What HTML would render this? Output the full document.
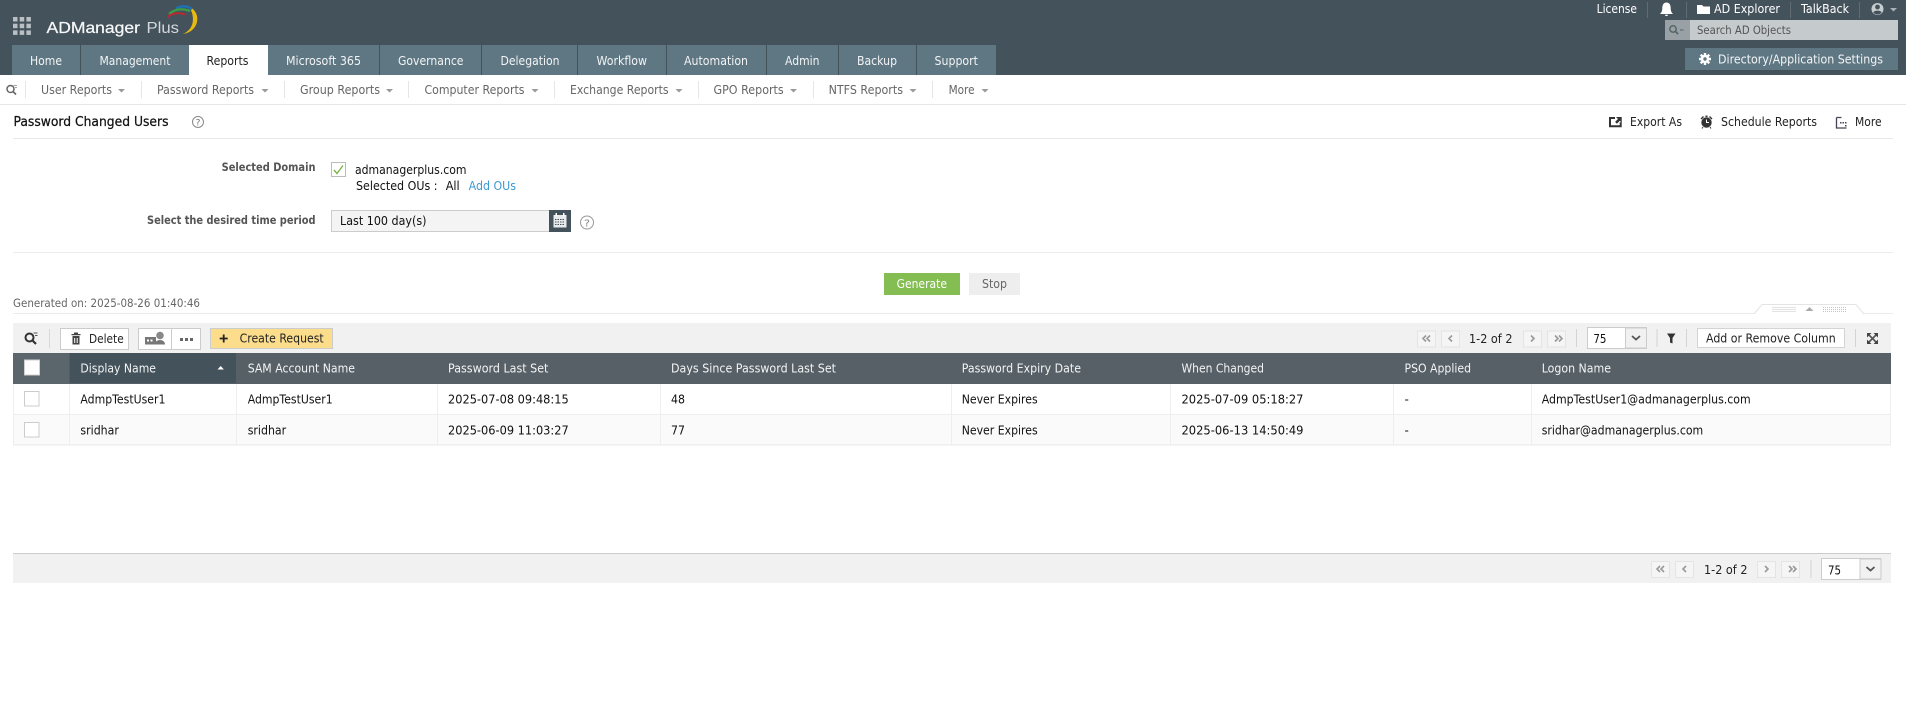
<!DOCTYPE html>
<html><head><meta charset="utf-8"><title>ADManager Plus</title>
<style>
html,body{margin:0;padding:0;background:#fff;width:1906px;height:724px;overflow:hidden}
svg{display:block}
text{font-family:"DejaVu Sans","Liberation Sans",sans-serif;font-size:12px;white-space:pre}
.w{fill:#fff}.g{fill:#666}.k{fill:#111}.b{font-weight:bold;fill:#555;font-size:11.5px}
.h{fill:#f2f4f5}
</style></head><body>
<svg xmlns="http://www.w3.org/2000/svg" width="1906" height="724" viewBox="0 0 1906 724">
<!-- header -->
<rect width="1906" height="75" fill="#44525b"/>
<g fill="#b9bfc3"><rect x="13" y="17" width="4.5" height="4.5"/><rect x="19.7" y="17" width="4.5" height="4.5"/><rect x="26.4" y="17" width="4.5" height="4.5"/><rect x="13" y="23.7" width="4.5" height="4.5"/><rect x="19.7" y="23.7" width="4.5" height="4.5"/><rect x="26.4" y="23.7" width="4.5" height="4.5"/><rect x="13" y="30.4" width="4.5" height="4.5"/><rect x="19.7" y="30.4" width="4.5" height="4.5"/><rect x="26.4" y="30.4" width="4.5" height="4.5"/></g>
<text x="46.5" y="33" textLength="93.5" lengthAdjust="spacingAndGlyphs" fill="#f6f7f8" stroke="#f6f7f8" stroke-width=".25" style="font-family:'Liberation Sans',sans-serif;font-size:16px">ADManager</text>
<text x="146.5" y="33" textLength="32.5" lengthAdjust="spacingAndGlyphs" fill="#d5d9dc" style="font-family:'Liberation Sans',sans-serif;font-size:16px">Plus</text>
<path d="M187.5 5.5C195 9 198.5 15 197 22C195.5 28.5 190 33 183 34C188.5 31.5 192 27.5 192.8 21.5C193.5 15 191.5 9.5 187.5 5.5Z" fill="#e8b90f"/>
<path d="M176 8.5Q184 4 192 9" fill="none" stroke="#1f6fb2" stroke-width="2.6"/>
<path d="M169 14Q178 6.500 190 11" fill="none" stroke="#3d9a46" stroke-width="2.300"/>
<path d="M167.500 17Q175 11 185 14.500" fill="none" stroke="#c0262d" stroke-width="1.800"/>

<!-- tabs -->
<g fill="#5f7783"><rect x="12" y="45" width="68" height="30"/><rect x="81" y="45" width="108" height="30"/><rect x="268" y="45" width="111" height="30"/><rect x="380" y="45" width="101" height="30"/><rect x="482" y="45" width="95" height="30"/><rect x="578" y="45" width="88" height="30"/><rect x="667" y="45" width="99" height="30"/><rect x="767" y="45" width="71" height="30"/><rect x="839" y="45" width="77" height="30"/><rect x="917" y="45" width="79" height="30"/></g>
<rect x="189" y="45" width="79" height="31" fill="#fff"/>
<g class="h">
<text class="h" x="30" y="65" textLength="32" lengthAdjust="spacingAndGlyphs">Home</text>
<text class="h" x="99.5" y="65" textLength="71" lengthAdjust="spacingAndGlyphs">Management</text>
<text x="206.500" y="65" textLength="42" lengthAdjust="spacingAndGlyphs" fill="#222">Reports</text>
<text class="h" x="286" y="65" textLength="75" lengthAdjust="spacingAndGlyphs">Microsoft 365</text>
<text class="h" x="398" y="65" textLength="65.5" lengthAdjust="spacingAndGlyphs">Governance</text>
<text class="h" x="500.500" y="65" textLength="59" lengthAdjust="spacingAndGlyphs">Delegation</text>
<text class="h" x="596.500" y="65" textLength="50.500" lengthAdjust="spacingAndGlyphs">Workflow</text>
<text class="h" x="684" y="65" textLength="64" lengthAdjust="spacingAndGlyphs">Automation</text>
<text class="h" x="785" y="65" textLength="34.500" lengthAdjust="spacingAndGlyphs">Admin</text>
<text class="h" x="857" y="65" textLength="40" lengthAdjust="spacingAndGlyphs">Backup</text>
<text class="h" x="934.500" y="65" textLength="43.500" lengthAdjust="spacingAndGlyphs">Support</text>
</g>

<!-- top right -->
<text class="w" x="1596.6" y="13" textLength="40.4" lengthAdjust="spacingAndGlyphs">License</text>
<g fill="#5f6c74"><rect x="1647" y="2" width="1" height="16"/><rect x="1686" y="2" width="1" height="16"/><rect x="1790" y="2" width="1" height="16"/><rect x="1859" y="2" width="1" height="16"/></g>
<path d="M1666.5 2.500C1663.5 2.500 1662.300 5 1662.300 8C1662.300 11 1661.500 12.500 1660 14H1673C1671.500 12.500 1670.700 11 1670.700 8C1670.700 5 1669.500 2.500 1666.500 2.500ZM1664.700 14.800A1.900 1.900 0 0 0 1668.300 14.800Z" fill="#fff"/>
<path d="M1697 5H1702L1703.500 6.500H1710V14H1697Z" fill="#fff"/>
<text class="w" x="1714" y="13" textLength="66" lengthAdjust="spacingAndGlyphs">AD Explorer</text>
<text class="w" x="1801" y="13" textLength="48" lengthAdjust="spacingAndGlyphs">TalkBack</text>
<circle cx="1877.500" cy="9" r="6" fill="#c8cdd0"/><circle cx="1877.500" cy="7" r="2.400" fill="#44525b"/><path d="M1873.300 12.400C1874.200 10 1880.800 10 1881.700 12.400A5.200 5.200 0 0 1 1873.300 12.400Z" fill="#44525b"/>
<path d="M1890 8h7l-3.500 3.500z" fill="#aab2b6"/>
<rect x="1665" y="20" width="25" height="20" fill="#99a1a6"/><rect x="1690" y="20" width="208" height="20" fill="#c5cacd"/>
<circle cx="1673" cy="29" r="3.200" fill="none" stroke="#566" stroke-width="1.500"/><path d="M1675.300 31.300l2.800 2.800" stroke="#566" stroke-width="1.800"/><path d="M1680 30h3.500" stroke="#566" stroke-width="1"/>
<text x="1697" y="34" textLength="94" lengthAdjust="spacingAndGlyphs" fill="#555" style="font-size:11.500px">Search AD Objects</text>
<rect x="1685" y="48" width="213" height="22" fill="#5f7783"/>
<g transform="translate(1705 59)"><path d="M-6 0H6M0-6V6M-4.300-4.300L4.300 4.300M4.300-4.300L-4.300 4.300" stroke="#fff" stroke-width="2.400"/><circle r="4.200" fill="#fff"/><circle r="1.700" fill="#5f7783"/></g>
<text class="h" x="1718" y="63.500" textLength="165" lengthAdjust="spacingAndGlyphs">Directory/Application Settings</text>

<!-- sub nav -->
<rect y="104" width="1906" height="1" fill="#e3e7e8"/>
<circle cx="10.500" cy="89" r="3.500" fill="none" stroke="#666" stroke-width="1.500"/><path d="M13 91.500l3 3" stroke="#666" stroke-width="1.700"/><path d="M13.500 85.500h3.500M15 87.500h2" stroke="#888" stroke-width=".8"/>
<g fill="#e4e6e7"><rect x="25" y="81" width="1" height="17"/><rect x="141" y="81" width="1" height="17"/><rect x="284" y="81" width="1" height="17"/><rect x="408" y="81" width="1" height="17"/><rect x="554" y="81" width="1" height="17"/><rect x="698" y="81" width="1" height="17"/><rect x="813" y="81" width="1" height="17"/><rect x="932" y="81" width="1" height="17"/></g>
<g class="g">
<text class="g" x="41" y="94" textLength="71" lengthAdjust="spacingAndGlyphs">User Reports</text>
<text class="g" x="157" y="94" textLength="97" lengthAdjust="spacingAndGlyphs">Password Reports</text>
<text class="g" x="300" y="94" textLength="80" lengthAdjust="spacingAndGlyphs">Group Reports</text>
<text class="g" x="424.500" y="94" textLength="100" lengthAdjust="spacingAndGlyphs">Computer Reports</text>
<text class="g" x="570" y="94" textLength="98.600" lengthAdjust="spacingAndGlyphs">Exchange Reports</text>
<text class="g" x="713.500" y="94" textLength="70.200" lengthAdjust="spacingAndGlyphs">GPO Reports</text>
<text class="g" x="828.600" y="94" textLength="74.400" lengthAdjust="spacingAndGlyphs">NTFS Reports</text>
<text class="g" x="948.600" y="94" textLength="26" lengthAdjust="spacingAndGlyphs">More</text>
</g>
<g fill="#999"><path d="M118 89h7l-3.500 3.500z"/><path d="M261.500 89h7l-3.500 3.500z"/><path d="M386 89h7l-3.500 3.500z"/><path d="M531.500 89h7l-3.500 3.500z"/><path d="M675.500 89h7l-3.500 3.500z"/><path d="M790 89h7l-3.500 3.500z"/><path d="M909.500 89h7l-3.500 3.500z"/><path d="M981.500 89h7l-3.500 3.500z"/></g>

<!-- title -->
<text x="13.500" y="126" textLength="155" lengthAdjust="spacingAndGlyphs" fill="#111" stroke="#111" stroke-width=".25" style="font-size:13px">Password Changed Users</text>
<circle cx="198" cy="122" r="5.500" fill="none" stroke="#888"/><text x="195.500" y="125.500" fill="#777" style="font-size:9px" textLength="5" lengthAdjust="spacingAndGlyphs">?</text>
<path d="M1609 117h6v2h-4v6.300h8.700v-3h2v5h-12.700z" fill="#333"/><path d="M1616 117h5.700v5.700l-1.900-1.900-2.900 2.900-1.800-1.800 2.900-2.900z" fill="#333"/>
<text x="1630" y="126" textLength="52" lengthAdjust="spacingAndGlyphs" fill="#222">Export As</text>
<circle cx="1706.500" cy="122.500" r="5.200" fill="#333"/><path d="M1706.500 119.500v3h2.500" stroke="#fff" fill="none"/><path d="M1700.500 118.500l2.500-2.500 1 1-2.500 2.500zM1712.500 118.500l-2.500-2.500-1 1 2.500 2.500zM1705.500 115.500h2v1.500h-2z" fill="#333"/><path d="M1703 127l-1 1.500M1710 127l1 1.500" stroke="#333"/>
<text x="1721" y="126" textLength="96" lengthAdjust="spacingAndGlyphs" fill="#222">Schedule Reports</text>
<path d="M1836.500 117.500h5M1836.500 117.500v10.500h10" stroke="#445" stroke-width="1.300" fill="none"/><path d="M1840 122h1.500v1.500H1840zM1842.500 122h1.500v1.500h-1.500zM1845 122h1.500v1.500H1845zM1845 125h1.500v1.500H1845z" fill="#445"/>
<text x="1855" y="126" textLength="26.600" lengthAdjust="spacingAndGlyphs" fill="#222">More</text>
<rect x="13" y="138" width="1880" height="1" fill="#e8e8e8"/>

<!-- form -->
<text class="b" x="221.600" y="171" textLength="93.900" lengthAdjust="spacingAndGlyphs">Selected Domain</text>
<rect x="331.500" y="162.500" width="14" height="14" fill="#fff" stroke="#bbb"/><path d="M334 170l3 3.500 6-8" fill="none" stroke="#7ab648" stroke-width="1.400"/>
<text class="k" x="355" y="174" textLength="111.500" lengthAdjust="spacingAndGlyphs">admanagerplus.com</text>
<text class="k" x="356" y="190" textLength="81.500" lengthAdjust="spacingAndGlyphs">Selected OUs :</text>
<text class="k" x="445.700" y="190" textLength="14" lengthAdjust="spacingAndGlyphs">All</text>
<text x="468.600" y="190" textLength="47.400" lengthAdjust="spacingAndGlyphs" fill="#3b9ad0">Add OUs</text>
<text class="b" x="147" y="224" textLength="168.500" lengthAdjust="spacingAndGlyphs">Select the desired time period</text>
<rect x="331.500" y="210.500" width="218" height="21" fill="#f4f4f4" stroke="#ccc"/>
<text class="k" x="340" y="225" textLength="86.500" lengthAdjust="spacingAndGlyphs">Last 100 day(s)</text>
<rect x="549" y="210" width="22" height="22" fill="#44525b"/>
<rect x="553.500" y="215" width="13" height="12.500" fill="#e8eaeb"/><rect x="555.500" y="213" width="1.500" height="3.500" fill="#fff"/><rect x="563" y="213" width="1.500" height="3.500" fill="#fff"/>
<path d="M555 219.500h10M555 222h10M555 224.500h10" stroke="#44525b" stroke-dasharray="1.500 1" fill="none"/>
<circle cx="587" cy="222.500" r="6.500" fill="none" stroke="#999"/><text x="584" y="226.500" fill="#888" style="font-size:10px" textLength="6" lengthAdjust="spacingAndGlyphs">?</text>
<rect x="13" y="252" width="1880" height="1" fill="#ececec"/>

<rect x="884" y="273" width="76" height="22" fill="#84bd52"/>
<text class="w" x="896.600" y="288" textLength="50.400" lengthAdjust="spacingAndGlyphs">Generate</text>
<rect x="969" y="273" width="51" height="22" fill="#eee"/>
<text class="g" x="982" y="288" textLength="25" lengthAdjust="spacingAndGlyphs">Stop</text>
<text x="13" y="307" textLength="187" lengthAdjust="spacingAndGlyphs" fill="#666" style="font-size:11.500px">Generated on: 2025-08-26 01:40:46</text>
<rect x="13" y="313" width="1880" height="1" fill="#ececec"/>
<path d="M1754 314L1762 304.500H1856L1864 314" fill="#fff" stroke="#e4e4e4"/>
<path d="M1772.500 307.500h23M1772.500 309.500h23M1772.500 311.500h23M1823 307.500h23M1823 309.500h23M1823 311.500h23" stroke="#c4c4c4" stroke-dasharray="1 1"/>
<path d="M1805.500 311l4-4 4 4z" fill="#aaa"/>

<!-- toolbar -->
<rect x="13" y="323" width="1878" height="30" fill="#f1f1f1"/>
<circle cx="29.500" cy="337.500" r="4" fill="none" stroke="#333" stroke-width="2"/><path d="M32.500 340.500l3.500 3.500" stroke="#333" stroke-width="2.200"/><path d="M33.500 333h4M35 335.500h2.500" stroke="#555"/>
<rect x="49" y="329" width="1" height="19" fill="#d8d8d8"/>
<rect x="60.500" y="328.500" width="68" height="21" fill="#fff" stroke="#ccc"/>
<path d="M71.500 334h9v1.300h-9zM74 332.500h4v1.500h-4zM72.500 336h7v8.500h-7z" fill="#444"/><path d="M74.700 338v5M77.200 338v5" stroke="#fff"/>
<text x="89" y="343" textLength="34.700" lengthAdjust="spacingAndGlyphs" fill="#222">Delete</text>
<rect x="138.500" y="328.500" width="62" height="21" fill="#fff" stroke="#ccc"/><rect x="171" y="329" width="1" height="20" fill="#ccc"/>
<rect x="145" y="337" width="11" height="7.500" fill="#777"/><rect x="147" y="339.500" width="2" height="2" fill="#fff"/><rect x="150.500" y="339.500" width="2" height="2" fill="#fff"/>
<circle cx="160" cy="335.500" r="3.800" fill="#888"/><path d="M154.500 344.500c.5-3 3-4.500 5.500-4.500s5 1.500 5 4.500z" fill="#777"/>
<path d="M180 338h3v3h-3zM185 338h3v3h-3zM190 338h3v3h-3z" fill="#666"/>
<rect x="210.500" y="328.500" width="122" height="20" fill="#fbdd8c" stroke="#ccc"/>
<path d="M223.700 334.500v8M219.700 338.500h8" stroke="#222" stroke-width="1.800"/>
<text x="239.600" y="342.500" textLength="84.100" lengthAdjust="spacingAndGlyphs" fill="#222">Create Request</text>

<!-- top pagination -->
<g fill="#f5f5f5" stroke="#e4e4e4"><rect x="1417.500" y="331" width="18" height="16"/><rect x="1441.500" y="331" width="18" height="16"/><rect x="1523.500" y="331" width="18" height="16"/><rect x="1547.500" y="331" width="18" height="16"/></g>
<g fill="none" stroke="#999" stroke-width="1.600"><path d="M1426 335.500l-3 3 3 3M1430 335.500l-3 3 3 3M1452 335.500l-3 3 3 3M1531 335.500l3 3-3 3M1555 335.500l3 3-3 3M1559 335.500l3 3-3 3"/></g>
<text x="1469" y="343" textLength="43.500" lengthAdjust="spacingAndGlyphs" fill="#222">1-2 of 2</text>
<rect x="1576" y="329" width="1" height="18" fill="#d4d4d4"/>
<rect x="1587.500" y="327.500" width="59" height="21" fill="#fff" stroke="#ccc"/><rect x="1625.500" y="328" width="21" height="20" fill="#f1f1f1" stroke="#ccc"/>
<text x="1593.400" y="343" textLength="13.100" lengthAdjust="spacingAndGlyphs" fill="#111">75</text>
<path d="M1632 336l4 3.500 4-3.500" fill="none" stroke="#555" stroke-width="1.800"/>
<rect x="1656.500" y="329" width="1" height="18" fill="#d4d4d4"/>
<path d="M1667 333.500h8.500l-3 4.500v5.500l-2.500-1v-4.500z" fill="#333"/>
<rect x="1686" y="329" width="1" height="18" fill="#d4d4d4"/>
<rect x="1697.500" y="328.500" width="147" height="19" fill="#fff" stroke="#d4d4d4"/>
<text x="1706" y="342.500" textLength="129.700" lengthAdjust="spacingAndGlyphs" fill="#222">Add or Remove Column</text>
<rect x="1855" y="329" width="1" height="18" fill="#d4d4d4"/>
<path d="M1869 335l7 7M1876 335l-7 7" stroke="#555" stroke-width="1.600"/><path d="M1867 333h4.500l-4.500 4.500zM1878 333h-4.500l4.500 4.500zM1867 344h4.500l-4.500-4.500zM1878 344h-4.500l4.500-4.500z" fill="#444"/>

<!-- table -->
<rect x="13" y="353" width="1878" height="31" fill="#576066"/>
<rect x="13" y="353" width="56.500" height="31" fill="#5b666c"/>
<rect x="69.500" y="353" width="166.500" height="30" fill="#44525b"/>
<rect x="24.500" y="360" width="15" height="15" fill="#fff" stroke="#d0d0d0"/>
<g class="h">
<text class="h" x="80.400" y="372.500" textLength="75.600" lengthAdjust="spacingAndGlyphs">Display Name</text>
<text class="h" x="247.700" y="372.500" textLength="107.300" lengthAdjust="spacingAndGlyphs">SAM Account Name</text>
<text class="h" x="448" y="372.500" textLength="100.400" lengthAdjust="spacingAndGlyphs">Password Last Set</text>
<text class="h" x="671" y="372.500" textLength="165" lengthAdjust="spacingAndGlyphs">Days Since Password Last Set</text>
<text class="h" x="961.700" y="372.500" textLength="119.300" lengthAdjust="spacingAndGlyphs">Password Expiry Date</text>
<text class="h" x="1181.500" y="372.500" textLength="82.500" lengthAdjust="spacingAndGlyphs">When Changed</text>
<text class="h" x="1404.500" y="372.500" textLength="66.500" lengthAdjust="spacingAndGlyphs">PSO Applied</text>
<text class="h" x="1541.700" y="372.500" textLength="69.300" lengthAdjust="spacingAndGlyphs">Logon Name</text>
</g>
<path d="M217.500 369.500l3.200-3.500 3.200 3.500z" fill="#fff"/>

<rect x="13" y="384" width="1878" height="30" fill="#fff"/>
<rect x="13" y="414.500" width="1878" height="30" fill="#fafafa"/>
<rect x="13" y="414" width="1878" height="1" fill="#eee"/><rect x="13" y="444.500" width="1878" height="1" fill="#e8e8e8"/>
<g fill="#eeeeee"><rect x="13" y="384" width="1" height="61"/><rect x="69" y="384" width="1" height="61"/><rect x="236" y="384" width="1" height="61"/><rect x="437" y="384" width="1" height="61"/><rect x="660" y="384" width="1" height="61"/><rect x="951" y="384" width="1" height="61"/><rect x="1170" y="384" width="1" height="61"/><rect x="1393" y="384" width="1" height="61"/><rect x="1531" y="384" width="1" height="61"/><rect x="1890" y="384" width="1" height="61"/></g>
<rect x="24.500" y="391.500" width="14.500" height="14.500" fill="#fff" stroke="#ccc"/><rect x="24.500" y="422.500" width="14.500" height="14.500" fill="#fff" stroke="#ccc"/>
<g class="k">
<text class="k" x="80.400" y="403.500" textLength="85" lengthAdjust="spacingAndGlyphs">AdmpTestUser1</text>
<text class="k" x="247.700" y="403.500" textLength="85" lengthAdjust="spacingAndGlyphs">AdmpTestUser1</text>
<text class="k" x="448" y="403.500" textLength="120.700" lengthAdjust="spacingAndGlyphs">2025-07-08 09:48:15</text>
<text class="k" x="671" y="403.500" textLength="14" lengthAdjust="spacingAndGlyphs">48</text>
<text class="k" x="961.700" y="403.500" textLength="76" lengthAdjust="spacingAndGlyphs">Never Expires</text>
<text class="k" x="1181.500" y="403.500" textLength="122" lengthAdjust="spacingAndGlyphs">2025-07-09 05:18:27</text>
<text class="k" x="1404.500" y="403.500">-</text>
<text class="k" x="1541.700" y="403.500" textLength="209" lengthAdjust="spacingAndGlyphs">AdmpTestUser1@admanagerplus.com</text>
<text class="k" x="80.400" y="434.500" textLength="38.500" lengthAdjust="spacingAndGlyphs">sridhar</text>
<text class="k" x="247.700" y="434.500" textLength="38.500" lengthAdjust="spacingAndGlyphs">sridhar</text>
<text class="k" x="448" y="434.500" textLength="120.700" lengthAdjust="spacingAndGlyphs">2025-06-09 11:03:27</text>
<text class="k" x="671" y="434.500" textLength="14" lengthAdjust="spacingAndGlyphs">77</text>
<text class="k" x="961.700" y="434.500" textLength="76" lengthAdjust="spacingAndGlyphs">Never Expires</text>
<text class="k" x="1181.500" y="434.500" textLength="122" lengthAdjust="spacingAndGlyphs">2025-06-13 14:50:49</text>
<text class="k" x="1404.500" y="434.500">-</text>
<text class="k" x="1541.700" y="434.500" textLength="161.500" lengthAdjust="spacingAndGlyphs">sridhar@admanagerplus.com</text>
</g>

<!-- bottom bar -->
<rect x="13" y="553" width="1878" height="30" fill="#f1f1f1"/><rect x="13" y="553" width="1878" height="1" fill="#ccc"/>
<g fill="#f5f5f5" stroke="#e4e4e4"><rect x="1651.500" y="561.500" width="18" height="16"/><rect x="1675.500" y="561.500" width="18" height="16"/><rect x="1757.500" y="561.500" width="18" height="16"/><rect x="1781.500" y="561.500" width="18" height="16"/></g>
<g fill="none" stroke="#999" stroke-width="1.600"><path d="M1660 566l-3 3 3 3M1664 566l-3 3 3 3M1686 566l-3 3 3 3M1765 566l3 3-3 3M1789 566l3 3-3 3M1793 566l3 3-3 3"/></g>
<text x="1704" y="574" textLength="43.500" lengthAdjust="spacingAndGlyphs" fill="#222">1-2 of 2</text>
<rect x="1810.500" y="560" width="1" height="18" fill="#d4d4d4"/>
<rect x="1821.500" y="558.500" width="59" height="21" fill="#fff" stroke="#ccc"/><rect x="1860" y="559" width="21" height="20" fill="#f1f1f1" stroke="#ccc"/>
<text x="1828" y="574.500" textLength="13.100" lengthAdjust="spacingAndGlyphs" fill="#111">75</text>
<path d="M1866.500 567l4 3.500 4-3.500" fill="none" stroke="#555" stroke-width="1.800"/>
</svg>
</body></html>
